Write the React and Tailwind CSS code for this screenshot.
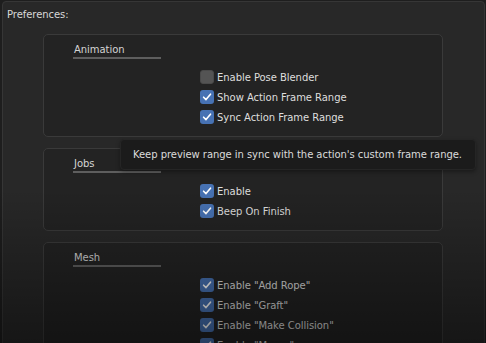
const sections = [
  {
    title: 'Animation',
    items: [
      { label: 'Enable Pose Blender', on: false },
      { label: 'Show Action Frame Range', on: true },
      { label: 'Sync Action Frame Range', on: true },
    ],
  },
  {
    title: 'Jobs',
    items: [
      { label: 'Enable', on: true },
      { label: 'Beep On Finish', on: true },
    ],
  },
  {
    title: 'Mesh',
    items: [
      { label: 'Enable "Add Rope"', on: true },
      { label: 'Enable "Graft"', on: true },
      { label: 'Enable "Make Collision"', on: true },
      { label: 'Enable "Merge"', on: true },
    ],
  },
];

function CheckBox({ on }) {
  return on ? (
    <div className="w-[14px] h-[14px] rounded-[3px] bg-[#4772b3] flex items-center justify-center shrink-0">
      <svg width="10" height="10" viewBox="0 0 10 10" fill="none">
        <path d="M1.6 5.2 L4 7.6 L8.5 2.2" stroke="#ffffff" strokeWidth="1.6" strokeLinecap="round" strokeLinejoin="round" />
      </svg>
    </div>
  ) : (
    <div className="w-[14px] h-[14px] rounded-[3px] bg-[#545454] border border-[#4a4a4a] shrink-0" />
  );
}

function Section({ title, items }) {
  return (
    <div className="ml-[40px] w-[400px] border border-[#3a3a3a] rounded-[5px] bg-[#232323] pt-[7px] pb-[9px]">
      <div className="ml-[29px] w-[88px] border-b-2 border-[#5e5e5e] pl-[1px] leading-[15px] text-[#d4d4d4]">
        {title}
      </div>
      <div className="mt-[8px] flex flex-col">
        {items.map(it => (
          <div key={it.label} className="h-[20px] flex items-center gap-[3px] pl-[156px]">
            <CheckBox on={it.on} />
            <span className="text-[#dedede] whitespace-nowrap">{it.label}</span>
          </div>
        ))}
      </div>
    </div>
  );
}

export default function App() {
  return (
    <div className="relative w-[486px] h-[343px] overflow-hidden bg-[#1e1e1e] pt-[1px] pl-[2px] pr-[1px] font-['DejaVu_Sans',sans-serif] text-[10px] tracking-[-0.05px]">
      <div className="h-[360px] border border-[#363636] rounded-[4px] bg-[#282828]">
        <div className="pl-[4px] pt-[6px] leading-[14px] text-[#d8d8d8]">Preferences:</div>
        <div className="mt-[12px] flex flex-col gap-[11px]">
          {sections.map(s => (
            <Section key={s.title} {...s} />
          ))}
        </div>
      </div>

      <div className="pointer-events-none absolute inset-0 bg-gradient-to-b from-transparent from-55% to-black/45" />

      <div className="absolute left-[120px] top-[139px] w-[356px] h-[31px] rounded-[4px] bg-[#1b1b1b] border border-[#252525] shadow-[0_2px_4px_rgba(0,0,0,0.35)] flex items-center pl-[12px] text-[#dcdcdc] whitespace-nowrap">
        Keep preview range in sync with the action's custom frame range.
      </div>
    </div>
  );
}
